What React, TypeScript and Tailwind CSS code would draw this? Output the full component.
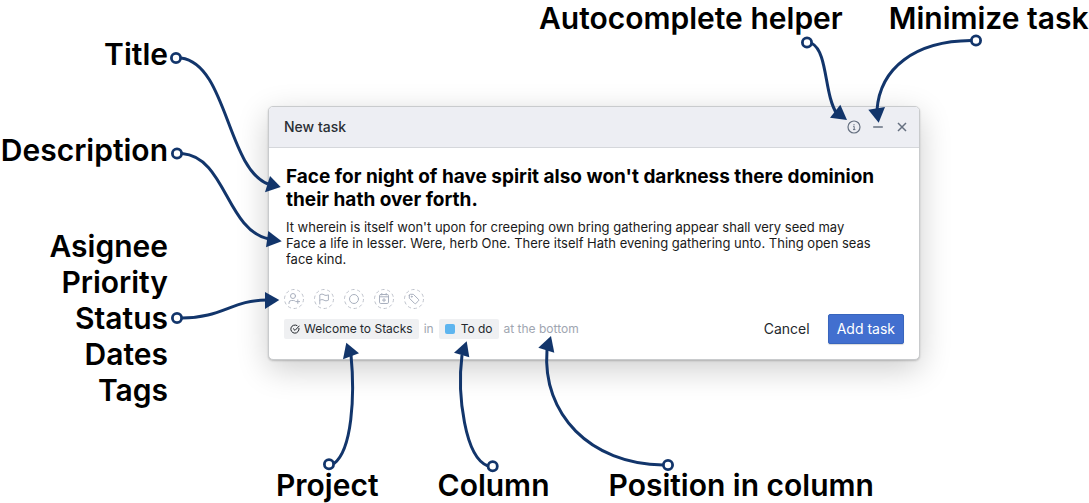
import React from "react";

type Arrow = { cx: number; cy: number; path: string; head: string };

const arrows: Arrow[] = [
  { cx: 176, cy: 58, path: "M181 58C227 64 227 168 268 184", head: "280.7,187 270,176 265,192.3" },
  { cx: 177, cy: 153.5, path: "M182 153.5C226 157 226 230 269 239", head: "281.7,241.3 268.3,231 266,247.3" },
  { cx: 177, cy: 318, path: "M182 318C222 318 232 300 267 300", head: "279.3,300 265,292 265,309" },
  { cx: 807, cy: 42.5, path: "M812 43.5C828 52 824 95 837 114", head: "847,120 840.3,104.7 830,117.7" },
  { cx: 976, cy: 40.5, path: "M971 40.5C915 41 880 68 877 110", head: "878.7,122.7 868.3,109.7 885,107" },
  { cx: 329, cy: 464.3, path: "M334 463.5C352 450 355 396 351 355", head: "346.3,342.7 359,353.3 343,359.3" },
  { cx: 492.7, cy: 466.3, path: "M488 466C465 458 457 395 462 355", head: "466.7,341.3 454,352.7 469.3,357.3" },
  { cx: 668, cy: 465, path: "M663 465C590 464 542 414 547 350", head: "551,336 538.3,347.7 554.3,352.7" },
];

function Arrows() {
  return (
    <svg
      className="pointer-events-none absolute top-0 left-0"
      width="1089"
      height="503"
      viewBox="0 0 1089 503"
      fill="none"
      aria-hidden="true"
    >
      {arrows.map((a) => (
        <g key={a.path}>
          <path d={a.path} stroke="#12356b" strokeWidth="3" />
          <polygon points={a.head} fill="#12356b" />
          <circle cx={a.cx} cy={a.cy} r="4.6" fill="#fff" stroke="#12356b" strokeWidth="2.8" />
        </g>
      ))}
    </svg>
  );
}

const attributes: { label: string; icon: React.ReactNode }[] = [
  {
    label: "Assignee",
    icon: (
      <>
        <circle cx="9" cy="7" r="2.5" />
        <path d="M5 14.5v-.6a2.4 2.4 0 0 1 2.4-2.4h2.2a2.4 2.4 0 0 1 1.6.6M13.8 10.8v3.6M12 12.6h3.6" />
      </>
    ),
  },
  {
    label: "Priority",
    icon: <path d="M5.8 15V5.8c1.5-1 3-.8 4.2 0s2.7.8 4.4 0v5.4c-1.7.8-3.2.8-4.4 0s-2.7-.8-4.2 0" />,
  },
  { label: "Status", icon: <circle cx="10" cy="10" r="4.5" /> },
  {
    label: "Dates",
    icon: (
      <>
        <rect x="5.5" y="5.5" width="9" height="9" rx="1.3" />
        <path d="M5.5 7.8h9M7.8 4.5v1.5M12.2 4.5v1.5M10 9.5v3.2M8.4 11.1h3.2" />
      </>
    ),
  },
  {
    label: "Tags",
    icon: (
      <>
        <path d="M5.3 6.3v2.9l5.2 5.2a1 1 0 0 0 1.4 0l2.6-2.6a1 1 0 0 0 0-1.4L9.3 5.3H6.3a1 1 0 0 0-1 1z" />
        <circle cx="7.7" cy="7.7" r=".5" />
      </>
    ),
  },
];

function NewTaskDialog() {
  return (
    <form
      role="dialog"
      aria-label="New task"
      className="w-full max-w-[652px] self-start overflow-hidden rounded-[5px] border border-[#c9cbcd] bg-white shadow-[0_1px_2px_rgba(0,0,0,0.2),0_9px_32px_rgba(0,0,0,0.2)]"
    >
      <header className="flex h-[41px] items-center justify-between border-b border-[#d5d7db] bg-[#edeef3] pr-[5px] pl-[15px]">
        <h2 className="text-sm font-medium text-[#2a2e34]">New task</h2>
        <div className="flex text-[#667080]">
          <button type="button" aria-label="Autocomplete help" className="flex size-6 items-center justify-center hover:text-black">
            <svg width="14" height="14" viewBox="0 0 14 14" fill="none" stroke="currentColor" strokeWidth="1.2">
              <circle cx="7" cy="7" r="6" />
              <path d="M6.2 6.4H7.2V9.6M6 9.6h2.4M7 4.1v1.2" strokeWidth="1" />
            </svg>
          </button>
          <button type="button" aria-label="Minimize" className="flex size-6 items-center justify-center hover:text-black">
            <svg width="14" height="14" viewBox="0 0 14 14" fill="none" stroke="currentColor" strokeWidth="1.3">
              <path d="M2.2 7h9.6" />
            </svg>
          </button>
          <button type="button" aria-label="Close" className="flex size-6 items-center justify-center hover:text-black">
            <svg width="14" height="14" viewBox="0 0 14 14" fill="none" stroke="currentColor" strokeWidth="1.5">
              <path d="M3 3l8 8M11 3l-8 8" />
            </svg>
          </button>
        </div>
      </header>

      <div className="flex flex-col pt-[17px] pr-8 pl-[17px]">
        <textarea
          aria-label="Title"
          rows={2}
          className="mb-2 block resize-none overflow-hidden text-[19px] leading-[23px] font-bold text-black outline-none"
          defaultValue={"Face for night of have spirit also won't darkness there dominion their hath over forth."}
        />
        <textarea
          aria-label="Description"
          rows={3}
          className="block resize-none overflow-hidden text-[13px] leading-4 text-[#1a1a1a] outline-none"
          defaultValue={
            "It wherein is itself won't upon for creeping own bring gathering appear shall very seed may\nFace a life in lesser. Were, herb One. There itself Hath evening gathering unto. Thing open seas face kind."
          }
        />
      </div>

      <div className="mt-[22px] flex gap-[10px] px-[15px]">
        {attributes.map((a) => (
          <button key={a.label} type="button" aria-label={a.label} className="size-5 text-[#a9b0be] hover:text-[#667080]">
            <svg width="20" height="20" viewBox="0 0 20 20" fill="none" stroke="currentColor" strokeLinecap="round" strokeLinejoin="round">
              <circle cx="10" cy="10" r="9.5" stroke="#bfc3cc" strokeDasharray="3.3 2.67" strokeLinecap="butt" />
              {a.icon}
            </svg>
          </button>
        ))}
      </div>

      <footer className="mt-[5px] flex items-center justify-between px-[15px] pb-[15px]">
        <div className="flex items-center gap-[5px] text-xs text-[#a0a6b1]">
          <button type="button" className="flex h-5 items-center gap-1 rounded-[2px] bg-[#eff0f2] px-[6px] text-[#24282d]">
            <svg width="10" height="10" viewBox="0 0 10 10" fill="none" stroke="currentColor" strokeLinecap="round" strokeLinejoin="round">
              <path d="M9 4.4A4.1 4.1 0 1 1 7 1.5M3.3 4.7l1.7 1.7L9.2 2" />
            </svg>
            Welcome to Stacks
          </button>
          <span>in</span>
          <button type="button" className="flex h-5 items-center gap-[6px] rounded-[2px] bg-[#eff0f2] px-[6px] text-[#24282d]">
            <span className="size-[10px] rounded-[2px] bg-[#5eb5ef]" />
            To do
          </button>
          <button type="button">at the bottom</button>
        </div>
        <div className="flex items-center gap-2 text-sm">
          <button type="button" className="h-[30px] px-[10px] text-[#24282d]">
            Cancel
          </button>
          <button
            type="submit"
            className="h-[30px] rounded-[2px] border border-[#3865bd] bg-[#426fcf] px-2 text-white shadow-[0_1px_1px_rgba(0,0,0,0.15)]"
          >
            Add task
          </button>
        </div>
      </footer>
    </form>
  );
}

export default function App() {
  return (
    <main className="relative overflow-hidden bg-white font-['Inter','Liberation_Sans',sans-serif] text-[30px] leading-9 font-semibold whitespace-nowrap text-black [&_form]:font-normal [&_textarea]:whitespace-pre-wrap">
      <div className="flex gap-[46px] pl-[539px]">
        <p>Autocomplete helper</p>
        <p>Minimize task</p>
      </div>
      <div className="flex gap-[100px]">
        <div className="flex w-[168px] shrink-0 flex-col items-end gap-[60px]">
          <p>Title</p>
          <p>Description</p>
          <ul className="text-right">
            <li>Asignee</li>
            <li>Priority</li>
            <li>Status</li>
            <li>Dates</li>
            <li>Tags</li>
          </ul>
        </div>
        <div className="flex min-w-0 flex-1 pt-[70px] leading-4">
          <NewTaskDialog />
        </div>
      </div>
      <div className="flex gap-[59px] pt-[59px] pl-[276px]">
        <p>Project</p>
        <p>Column</p>
        <p>Position in column</p>
      </div>
      <Arrows />
    </main>
  );
}
